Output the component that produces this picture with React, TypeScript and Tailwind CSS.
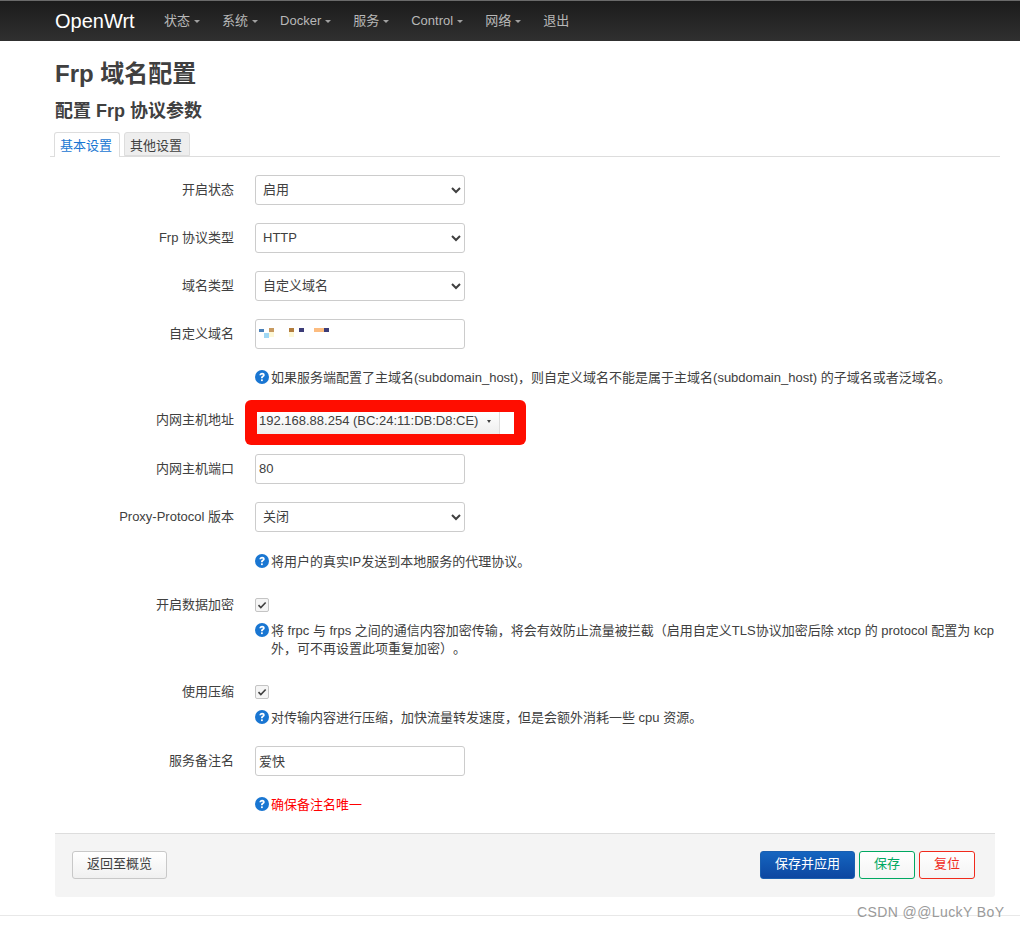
import { useState } from "react";

const navItems = [
  { label: "状态", caret: true },
  { label: "系统", caret: true },
  { label: "Docker", caret: true },
  { label: "服务", caret: true },
  { label: "Control", caret: true },
  { label: "网络", caret: true },
  { label: "退出", caret: false },
];

const Help = () => (
  <svg viewBox="0 0 16 16" className="mr-[2px] mt-[1px] h-[14px] w-[14px] shrink-0">
    <circle cx="8" cy="8" r="8" fill="#1976d2" />
    <path d="M5 6.100c.1-1.800 1.400-2.900 3.100-2.900s3 1 3 2.500c0 1.100-.6 1.700-1.400 2.200-.6.4-.8.7-.8 1.300v.3H6.900v-.5c0-1.100.4-1.600 1.200-2.100.6-.4.9-.7.9-1.100 0-.5-.4-.8-.9-.8-.6 0-1 .4-1.100 1.100z" fill="#fff" />
    <rect x="6.900" y="10.700" width="2" height="2" fill="#fff" />
  </svg>
);

const Desc = ({ children, className }: { children: React.ReactNode; className?: string }) => (
  <div className={"flex leading-[18px] " + (className ?? "")}>
    <Help />
    <p>{children}</p>
  </div>
);

const Row = ({ label, children, className, labelClass }: { label: string; children: React.ReactNode; className?: string; labelClass?: string }) => (
  <div className={"flex " + (className ?? "")}>
    <label className={"w-[180px] pr-[1px] text-right leading-[18px] text-[#404040] " + (labelClass ?? "pt-[6px]")}>{label}</label>
    <div className="ml-[20px] flex-1">{children}</div>
  </div>
);

const Select = ({ value, options }: { value: string; options?: string[] }) => (
  <select
    defaultValue={value}
    className="block h-[30px] w-[210px] rounded-[3px] border border-[#cccccc] bg-white pb-[2px] pl-[3px] text-[13px] text-[#404040]"
  >
    {(options ?? [value]).map((o) => (
      <option key={o}>{o}</option>
    ))}
  </select>
);

const Input = ({ value }: { value: string }) => {
  const [v, setV] = useState(value);
  return (
    <input
      value={v}
      onChange={(e) => setV(e.target.value)}
      className="block h-[30px] w-[210px] rounded-[3px] border border-[#cccccc] bg-white px-[3px] pb-[2px] text-[13px] text-[#404040]"
    />
  );
};

const Check = () => (
  <div className="flex h-[14px] w-[14px] items-center justify-center rounded-[2px] border border-[#c4c4c4] bg-[#f5f5f5]">
    <svg viewBox="0 0 12 12" className="h-[10px] w-[10px]">
      <path d="M1.800 6.200 4.600 9 10.400 3" fill="none" stroke="#404040" strokeWidth="1.900" />
    </svg>
  </div>
);

// the blurred-out domain in the reference
const Blur = () => (
  <svg viewBox="0 0 70 12" className="absolute left-[4px] top-[9px] h-[12px] w-[70px]">
    <rect x="0" y="1" width="5" height="3" fill="#4a80b8" />
    <rect x="5" y="5" width="5" height="5" fill="#a0d8f4" />
    <rect x="10" y="0" width="5" height="4" fill="#c89a60" />
    <rect x="10" y="4" width="5" height="5" fill="#fdf8d8" />
    <rect x="30" y="0" width="5" height="4" fill="#b27c3c" />
    <rect x="30" y="4" width="5" height="5" fill="#fdf8d8" />
    <rect x="40" y="0" width="5" height="4" fill="#3c3c78" />
    <rect x="55" y="0" width="10" height="4" fill="#fcbc80" />
    <rect x="65" y="0" width="5" height="4" fill="#3c3c78" />
  </svg>
);

export default function App() {
  return (
    <div className="relative h-[928px] w-[1020px] overflow-hidden bg-white font-['Liberation_Sans','Noto_Sans_CJK_SC',sans-serif] text-[13px] text-[#404040] [text-spacing-trim:space-all]">
      <nav className="flex h-[41px] items-center border-t border-[#6a6a6a] bg-gradient-to-b from-[#1c1c1c] to-[#303030] pl-[55px]">
        <span className="w-[109px] text-[20px] leading-[20px] text-white">OpenWrt</span>
        <ul className="flex gap-[22px] text-[13px] text-[#b8b8b8]">
          {navItems.map((n) => (
            <li key={n.label} className="flex items-center">
              {n.label}
              {n.caret && <span className="ml-[4px] mt-[1px] border-x-[3.500px] border-t-[3.500px] border-x-transparent border-t-[#a0a0a0]" />}
            </li>
          ))}
        </ul>
      </nav>

      <main className="pl-[55px] pt-[19px]">
        <h2 className="text-[24px] font-bold leading-[28px] text-[#404040]">Frp 域名配置</h2>
        <h3 className="mt-[10px] text-[18px] font-bold leading-[26px] text-[#404040]">配置 Frp 协议参数</h3>

        <div className="-ml-[5px] mt-[8px] flex h-[25px] w-[950px] gap-[4px] border-b border-[#dddddd] pl-[4px]">
          <div className="h-[25px] rounded-t-[3px] border border-b-0 border-[#dddddd] bg-white pl-[5px] pr-[7px] pt-[4px] leading-[18px] text-[#1976d2]">基本设置</div>
          <div className="h-[24px] rounded-t-[3px] border border-[#dddddd] bg-[#eeeeee] pl-[5px] pr-[7px] pt-[4px] leading-[18px] text-[#404040]">其他设置</div>
        </div>

        <div className="mt-[18px]">
          <Row label="开启状态">
            <Select value="启用" options={["启用", "关闭"]} />
          </Row>
          <Row label="Frp 协议类型" className="mt-[18px]">
            <Select value="HTTP" options={["HTTP", "HTTPS"]} />
          </Row>
          <Row label="域名类型" className="mt-[18px]">
            <Select value="自定义域名" />
          </Row>
          <Row label="自定义域名" className="mt-[18px]">
            <div className="relative w-[210px]">
              <Input value="" />
              <Blur />
            </div>
            <Desc className="mt-[20px]">如果服务端配置了主域名(subdomain_host)，则自定义域名不能是属于主域名(subdomain_host) 的子域名或者泛域名。</Desc>
          </Row>
          <Row label="内网主机地址" className="mt-[13px]" labelClass="pt-[11px]">
            <div className="-ml-[10px] h-[45px] w-[281px] rounded-[6px] bg-[#ff0d00] px-[12px] pt-[12px]">
              <div className="flex h-[22px] w-[257px] bg-white">
                <div className="flex w-[243px] items-center border-r border-[#dddddd] bg-gradient-to-b from-white to-[#eeeeee] pb-[5px] pl-[2px] text-[#404040]">
                  192.168.88.254 (BC:24:11:DB:D8:CE)
                  <span className="ml-[9px] mt-[2px] border-x-[2.500px] border-t-[3px] border-x-transparent border-t-[#404040]" />
                </div>
              </div>
            </div>
          </Row>
          <Row label="内网主机端口" className="mt-[9px]">
            <Input value="80" />
          </Row>
          <Row label="Proxy-Protocol 版本" className="mt-[18px]">
            <Select value="关闭" />
            <Desc className="mt-[21px]">将用户的真实IP发送到本地服务的代理协议。</Desc>
          </Row>
          <Row label="开启数据加密" className="mt-[19px]">
            <div className="pt-[8px]">
              <Check />
            </div>
            <Desc className="mt-[10px] w-[742px]">将 frpc 与 frps 之间的通信内容加密传输，将会有效防止流量被拦截（启用自定义TLS协议加密后除 xtcp 的 protocol 配置为 kcp 外，可不再设置此项重复加密）。</Desc>
          </Row>
          <Row label="使用压缩" className="mt-[20px]" labelClass="pt-[5px]">
            <div className="pt-[7px]">
              <Check />
            </div>
            <Desc className="mt-[10px]">对传输内容进行压缩，加快流量转发速度，但是会额外消耗一些 cpu 资源。</Desc>
          </Row>
          <Row label="服务备注名" className="mt-[19px]">
            <Input value="爱快" />
            <Desc className="mt-[20px]">
              <span className="text-[#ff0000]">确保备注名唯一</span>
            </Desc>
          </Row>
        </div>

        <div className="mt-[19px] flex h-[64px] w-[940px] items-center justify-between rounded-b-[3px] border-t border-[#dddddd] bg-[#f4f4f4] px-[17px] pb-[2px]">
          <button className="h-[28px] w-[95px] rounded-[3px] border border-[#c8c8c8] bg-gradient-to-b from-white to-[#f0f0f0] pb-[2px] text-[#404040]">返回至概览</button>
          <div className="flex gap-[4px] pr-[3px]">
            <button className="h-[28px] w-[95px] rounded-[3px] border border-[#1a5fb0] bg-gradient-to-b from-[#1565c0] to-[#0d47a1] pb-[2px] text-white">保存并应用</button>
            <button className="h-[28px] w-[56px] rounded-[3px] border border-[#00a862] bg-gradient-to-b from-white to-[#f4f4f4] pb-[2px] text-[#00a862]">保存</button>
            <button className="h-[28px] w-[56px] rounded-[3px] border border-[#f02a1c] bg-gradient-to-b from-white to-[#f4f4f4] pb-[2px] text-[#f02a1c]">复位</button>
          </div>
        </div>
      </main>

      <div className="mt-[18px] border-t border-[#e8e8e8]" />
      <span className="absolute left-[857px] top-[902px] text-[14px] tracking-[0.4px] text-[#9a9a9a]">CSDN @@LuckY BoY</span>
    </div>
  );
}
